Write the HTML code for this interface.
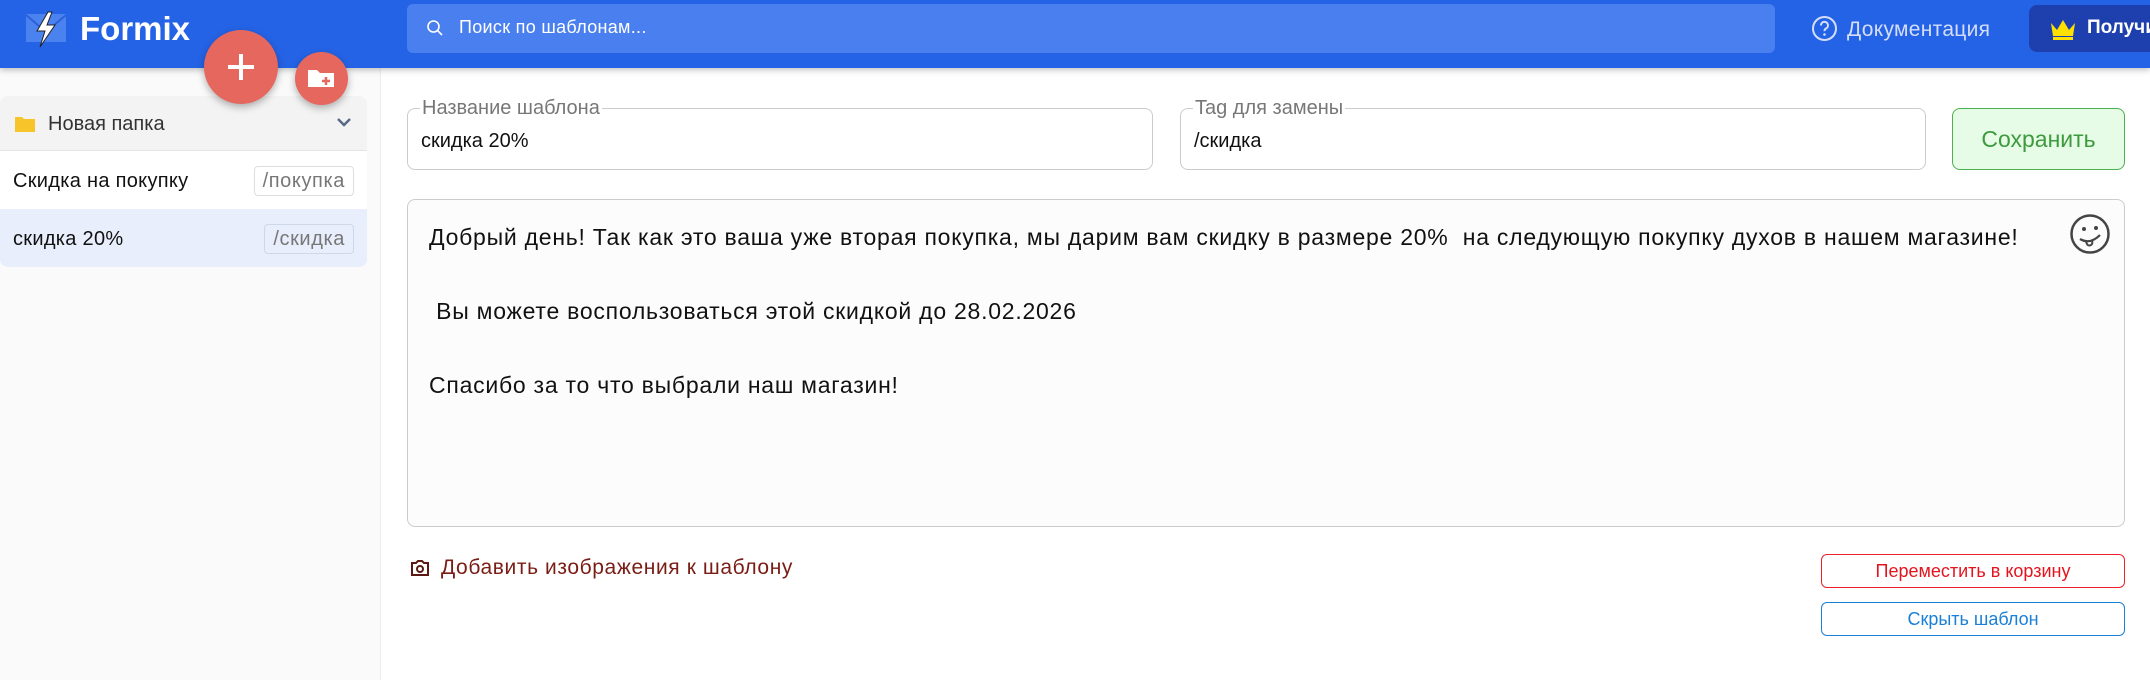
<!DOCTYPE html>
<html><head><meta charset="utf-8"><style>
*{box-sizing:border-box;margin:0;padding:0}
body{width:2150px;height:680px;overflow:hidden;background:#fff;font-family:"Liberation Sans","DejaVu Sans",sans-serif;position:relative;color:#111}
.hdr{position:absolute;left:0;top:0;width:2150px;height:68px;background:#2563e6;box-shadow:0 2px 6px rgba(0,0,0,.25);z-index:2}
.logo{position:absolute;left:26px;top:14px;width:40px;height:28px;background:#4a82f0}
.brand{position:absolute;left:80px;top:10px;font-size:33px;font-weight:bold;color:#fff}
.search{position:absolute;left:407px;top:4px;width:1368px;height:49px;background:#4a7fef;border-radius:6px}
.search span{position:absolute;left:52px;top:13px;font-size:18px;color:#fff;letter-spacing:.3px}
.doc{position:absolute;top:18px;font-size:21px;color:#d4defa;letter-spacing:.3px}
.prem{position:absolute;left:2029px;top:5px;width:140px;height:47px;background:#1e40af;border-radius:8px}
.prem b{position:absolute;left:58px;top:12px;color:#fff;font-size:19px}
.side{position:absolute;left:0;top:68px;width:381px;height:612px;background:#fafafa;border-right:1px solid #eee}
.fh{position:absolute;left:0;top:96px;width:367px;height:55px;background:#f3f3f3;border-radius:8px 8px 0 0;border-bottom:1px solid #e4e4e4}
.fh span{position:absolute;left:48px;top:17px;font-size:20px;color:#333}
.it{position:absolute;left:0;width:367px;height:58px;font-size:20px}
.it span{position:absolute;left:13px;top:19px;letter-spacing:.3px}
.tag{position:absolute;right:13px;top:15px;height:30px;padding:0 8px;border:1px solid #ddd;border-radius:4px;color:#777;line-height:28px;font-size:20px;letter-spacing:.6px;background:#fff}
.fab{position:absolute;border-radius:50%;background:#e5675e;box-shadow:0 3px 8px rgba(0,0,0,.3);z-index:3}
.fld{position:absolute;top:108px;height:62px;border:1px solid #ccc;border-radius:8px;background:#fff}
.fld .l{position:absolute;left:12px;top:-11px;background:#fff;padding:0 2px;color:#777;font-size:20px;line-height:20px}
.fld .v{position:absolute;left:13px;top:21px;font-size:20px}
.save{position:absolute;left:1952px;top:108px;width:173px;height:62px;border:1px solid #4caf50;border-radius:8px;background:#e6fce6;color:#3d9a3d;font-size:23px;text-align:center;line-height:60px}
.ta{position:absolute;left:407px;top:199px;width:1718px;height:328px;border:1px solid #ccc;border-radius:8px;background:#fcfcfc}
.ta p{position:absolute;left:21px;font-size:23px;white-space:pre;letter-spacing:.75px}
.add{position:absolute;left:410px;top:556px;font-size:21px;color:#7a1d14;letter-spacing:.6px}
.btn{position:absolute;left:1821px;width:304px;height:34px;border-radius:6px;text-align:center;line-height:32px;font-size:18px;background:#fff}
</style></head><body>
<div class="hdr">
 <div class="logo"></div>
 <svg style="position:absolute;left:26px;top:10px" width="40" height="38" viewBox="0 0 40 38"><path d="M0 5 L20 22 L40 5" fill="none" stroke="#2c5fd8" stroke-width="2"/><path d="M22 2 L11 21 H19 L14 37 L29 15 H21 L26 2 Z" fill="#fff" stroke="#222" stroke-width="1"/></svg>
 <div class="brand">Formix</div>
 <div class="search"><svg style="position:absolute;left:19px;top:15px" width="18" height="18" viewBox="0 0 18 18"><circle cx="7.5" cy="7.5" r="5.5" fill="none" stroke="#fff" stroke-width="1.6"/><path d="M11.5 11.5 L16 16" stroke="#fff" stroke-width="1.6"/></svg><span>Поиск по шаблонам...</span></div>
 <svg style="position:absolute;left:1811px;top:15px" width="27" height="27" viewBox="0 0 27 27"><circle cx="13.5" cy="13.5" r="11.5" fill="none" stroke="#d4defa" stroke-width="2"/><path d="M10 10.5 a3.5 3.5 0 1 1 5 3 c-1.3.7-1.5 1.4-1.5 2.6" fill="none" stroke="#d4defa" stroke-width="2"/><circle cx="13.5" cy="19.5" r="1.3" fill="#d4defa"/></svg>
 <div class="doc" style="left:1847px">Документация</div>
 <div class="prem"><svg style="position:absolute;left:20px;top:12px" width="28" height="24" viewBox="0 0 28 24"><path d="M2 6 L8 13 L14 3 L20 13 L26 6 L24 19 H4 Z" fill="#ffe100"/><rect x="4" y="20" width="20" height="3" fill="#ffe100"/></svg><b>Получить</b></div>
</div>
<div class="side"></div>
<div class="fab" style="left:204px;top:30px;width:74px;height:74px"><svg width="74" height="74"><path d="M37 24V50M24 37H50" stroke="#fff" stroke-width="4"/></svg></div>
<div class="fab" style="left:295px;top:52px;width:53px;height:53px"><svg width="53" height="53"><path d="M13 18 h9 l3 3 h14 v14 h-26 z" fill="#fff"/><path d="M31 25 v8 M27 29 h8" stroke="#e5675e" stroke-width="2.5"/></svg></div>
<div class="fh"><svg style="position:absolute;left:14px;top:19px" width="22" height="18" viewBox="0 0 22 18"><path d="M1 2 h7 l2 2 h11 v13 h-20 z" fill="#f7c52a"/></svg><span>Новая папка</span><svg style="position:absolute;left:336px;top:21px" width="16" height="10"><path d="M2 2 L8 8 L14 2" fill="none" stroke="#5a6a85" stroke-width="2.5"/></svg></div>
<div class="it" style="top:151px;background:#fff"><span>Скидка на покупку</span><div class="tag">/покупка</div></div>
<div class="it" style="top:209px;background:#e8eefb;border-radius:0 0 8px 8px"><span>скидка 20%</span><div class="tag" style="background:#e8eefb;border-color:#cfd8e8">/скидка</div></div>
<div class="fld" style="left:407px;width:746px"><div class="l">Название шаблона</div><div class="v">скидка 20%</div></div>
<div class="fld" style="left:1180px;width:746px"><div class="l">Tag для замены</div><div class="v">/скидка</div></div>
<div class="save">Сохранить</div>
<div class="ta">
 <p style="top:24px">Добрый день! Так как это ваша уже вторая покупка, мы дарим вам скидку в размере 20%  на следующую покупку духов в нашем магазине!</p>
 <p style="top:98px"> Вы можете воспользоваться этой скидкой до 28.02.2026</p>
 <p style="top:172px">Спасибо за то что выбрали наш магазин!</p>
 <svg style="position:absolute;left:1661px;top:13px" width="42" height="42" viewBox="0 0 42 42"><circle cx="21" cy="21" r="18.5" fill="none" stroke="#444" stroke-width="2.5"/><circle cx="15" cy="16" r="2" fill="#444"/><circle cx="27" cy="15" r="2" fill="#444"/><path d="M11 26 q10 6 20-4" fill="none" stroke="#444" stroke-width="2.2"/><path d="M17 28 q1 6 5 4 q2-1 1-5" fill="none" stroke="#444" stroke-width="2"/></svg>
</div>
<svg style="position:absolute;left:410px;top:558px" width="20" height="20" viewBox="0 0 20 20"><path d="M2 5 h4 l2-2 h4 l2 2 h4 v12 h-16 z" fill="none" stroke="#5a1a12" stroke-width="2"/><circle cx="10" cy="11" r="3" fill="none" stroke="#5a1a12" stroke-width="2"/></svg>
<div class="add" style="left:441px">Добавить изображения к шаблону</div>
<div class="btn" style="top:554px;border:1px solid #f0202a;color:#e4141e">Переместить в корзину</div>
<div class="btn" style="top:602px;border:1px solid #1a7fd6;color:#1a7fd6">Скрыть шаблон</div>
</body></html>
